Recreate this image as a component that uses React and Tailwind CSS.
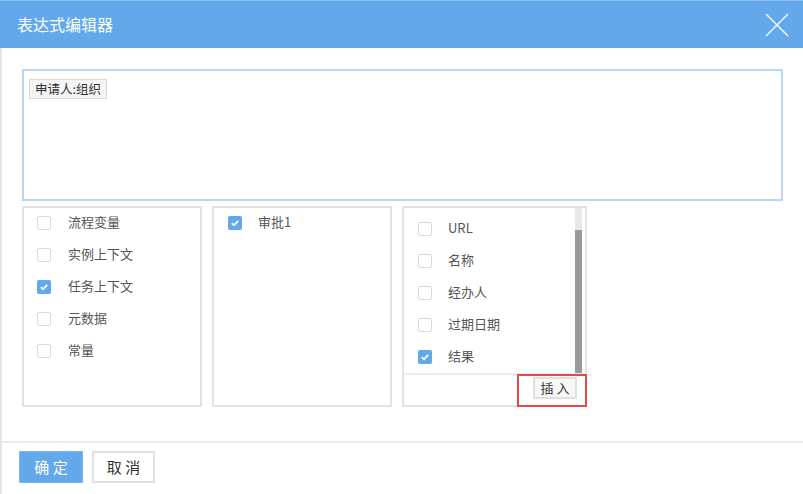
import React from 'react';

const font = { fontFamily: '"Noto Sans CJK SC", "Liberation Sans", sans-serif' };

// small checkbox, blue when checked
const Check = ({ checked }) =>
  checked ? (
    <span className="w-[14px] h-[14px] rounded-[2px] bg-[#62a8ea] flex items-center justify-center shrink-0">
      <svg width="10" height="10" viewBox="0 0 10 10">
        <path d="M1.8 5.2 L4 7.3 L8.2 2.8" fill="none" stroke="#fff" strokeWidth="1.8" />
      </svg>
    </span>
  ) : (
    <span className="w-[14px] h-[14px] rounded-[2px] border border-[#dcdcdc] bg-white shrink-0" />
  );

const Row = ({ label, checked, gap = 'gap-[17px]' }) => (
  <div className={`h-[32px] flex items-center ${gap}`}>
    <Check checked={checked} />
    <span className="text-[13px] text-[#555] leading-[14px] -mt-[2px]">{label}</span>
  </div>
);

const vars = [
  { label: '流程变量' },
  { label: '实例上下文' },
  { label: '任务上下文', checked: true },
  { label: '元数据' },
  { label: '常量' },
];

const fields = [
  { label: 'URL' },
  { label: '名称' },
  { label: '经办人' },
  { label: '过期日期' },
  { label: '结果', checked: true },
];

export default function App() {
  return (
    <div className="w-[803px] h-[494px] bg-white flex flex-col overflow-hidden" style={font}>
      {/* header */}
      <div className="h-[48px] shrink-0 bg-[#62a8ea] border-t border-[#8ec1ef] pl-[17px] pr-[14px] flex items-center justify-between">
        <span className="text-white text-[16px] -mt-[1px]">表达式编辑器</span>
        <svg width="24" height="24" viewBox="0 0 24 24">
          <path d="M1 1 L23 23 M23 1 L1 23" stroke="#fff" strokeWidth="1.3" fill="none" />
        </svg>
      </div>

      {/* body */}
      <div className="flex-1 flex flex-col border-l-2 border-[#e6e6e6]">
        <div className="pl-[20px] pt-[21px] h-[393px] shrink-0 flex flex-col">
          <div className="w-[761px] h-[132px] border-2 border-[#b9d7f3] pt-[4px] pl-[5px]">
            <span className="inline-block border border-[#dadada] bg-[#f5f5f5] px-[5px] h-[20px] leading-[18px] text-[12.5px] text-[#333]">
              申请人:组织
            </span>
          </div>

          <div className="mt-[5px] flex gap-[10px]">
            <div className="w-[180px] h-[201px] border-2 border-[#e3e3e3] pl-[13px]">
              <div className="-mt-[1px]">
                {vars.map((v) => (
                  <Row key={v.label} {...v} />
                ))}
              </div>
            </div>

            <div className="w-[180px] h-[201px] border-2 border-[#e3e3e3] pl-[14px]">
              <div className="-mt-[1px]">
                <Row label="审批1" checked gap="gap-[16px]" />
              </div>
            </div>

            <div className="relative w-[185px] h-[201px] border-2 border-[#e3e3e3] flex flex-col">
              <div className="h-[165px] flex">
                <div className="flex-1 pl-[14px] pt-[5px]">
                  {fields.map((f) => (
                    <Row key={f.label} {...f} gap="gap-[16px]" />
                  ))}
                </div>
                <div className="w-[7px] bg-[#e8e8e8] mr-[3px] flex flex-col">
                  <div className="h-[22px]" />
                  <div className="flex-1 bg-[#9a9a9a]" />
                </div>
              </div>
              <div className="flex-1 border-t-2 border-[#ececec] flex items-start justify-end pr-[8px] pt-[2px]">
                <span className="w-[44px] h-[22px] border-2 border-[#e0e0e0] bg-[#f7f7f7] text-[13px] text-[#333] flex items-center justify-center">
                  插 入
                </span>
              </div>
              {/* red highlight frame */}
              <div className="absolute right-[-2px] bottom-[-2px] w-[70px] h-[33px] border-2 border-[#e8474b]" />
            </div>
          </div>
        </div>

        {/* footer */}
        <div className="border-t-2 border-[#ececec] pl-[17px] pt-[8px] flex gap-[9px]">
          <span className="w-[64px] h-[32px] bg-[#62a8ea] border border-[#7db7ee] text-white text-[15px] flex items-center justify-center">
            确 定
          </span>
          <span className="w-[63px] h-[32px] bg-white border-2 border-[#e0e0e0] text-[#333] text-[15px] flex items-center justify-center">
            取 消
          </span>
        </div>
      </div>
    </div>
  );
}
